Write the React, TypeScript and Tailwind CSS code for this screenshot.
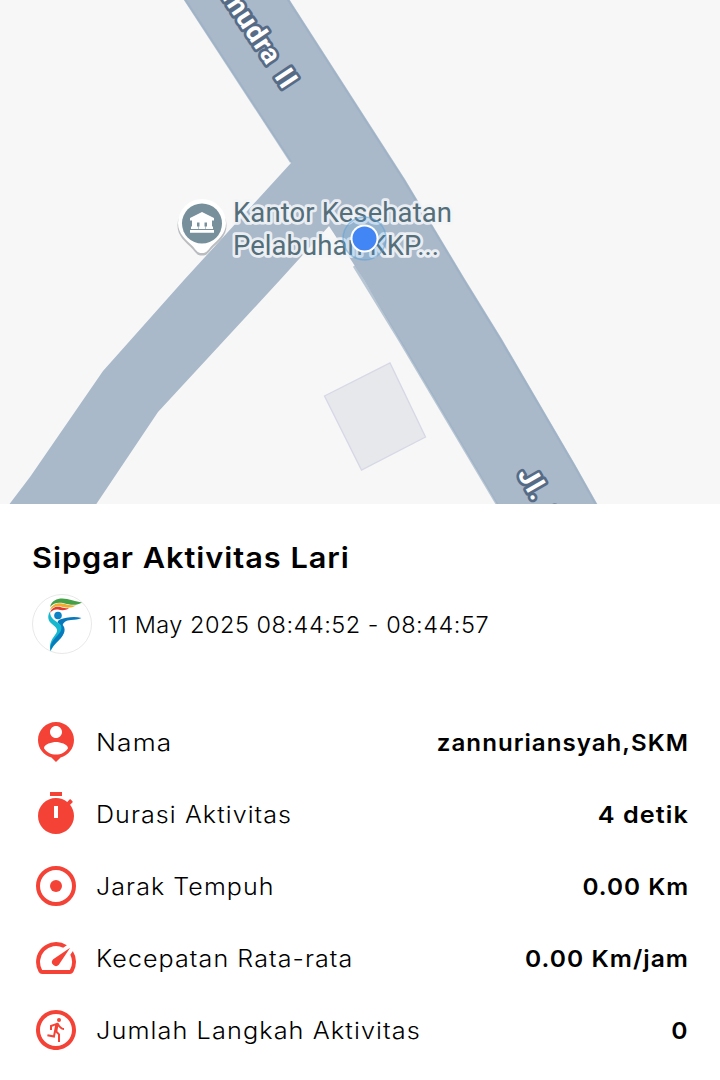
import type { ReactNode } from 'react';
import { MdOutlineRunCircle } from 'react-icons/md';

interface Stat {
  label: string;
  value: string;
  icon: ReactNode;
  labelClass: string;
  valueClass: string;
}

const iconProps = { viewBox: '0 0 24 24', fill: 'currentColor', className: 'size-12' };

const stats: Stat[] = [
  {
    label: 'Nama',
    value: 'zannuriansyah,SKM',
    labelClass: 'scale-x-[1.12]',
    valueClass: 'scale-x-[1.025]',
    icon: (
      <svg {...iconProps}>
        <path d="M12 2c-4.97 0-9 4.03-9 9 0 4.17 2.84 7.67 6.69 8.69L12 22l2.31-2.31C18.16 18.67 21 15.17 21 11c0-4.97-4.03-9-9-9zm0 2c1.66 0 3 1.34 3 3s-1.34 3-3 3-3-1.34-3-3 1.34-3 3-3zm0 14.3c-2.5 0-4.71-1.28-6-3.22.03-1.99 4-3.08 6-3.08 1.99 0 5.97 1.09 6 3.08-1.29 1.94-3.5 3.22-6 3.22z" />
      </svg>
    ),
  },
  {
    label: 'Durasi Aktivitas',
    value: '4 detik',
    labelClass: 'scale-x-[1.067]',
    valueClass: 'scale-x-[1.075]',
    icon: (
      <svg {...iconProps}>
        <path d="M15 1H9v2h6V1zm4.03 6.39 1.42-1.42c-.43-.51-.9-.99-1.41-1.41l-1.42 1.42C16.07 4.74 14.12 4 12 4c-4.97 0-9 4.03-9 9s4.02 9 9 9 9-4.03 9-9c0-2.12-.74-4.07-1.97-5.61zM13 14h-2V8h2v6z" />
      </svg>
    ),
  },
  {
    label: 'Jarak Tempuh',
    value: '0.00 Km',
    labelClass: 'scale-x-[1.065]',
    valueClass: 'scale-x-[1.035]',
    icon: (
      <svg {...iconProps}>
        <circle cx="12" cy="12" r="9" fill="none" stroke="currentColor" strokeWidth="2" />
        <circle cx="12" cy="12" r="3" />
      </svg>
    ),
  },
  {
    label: 'Kecepatan Rata-rata',
    value: '0.00 Km/jam',
    labelClass: 'scale-x-[1.067]',
    valueClass: 'scale-x-[1.045]',
    icon: (
      <svg {...iconProps}>
        <path d="M20.38 8.57l-1.23 1.85a8 8 0 0 1-.22 7.58H5.07A8 8 0 0 1 15.58 6.85l1.85-1.23A10 10 0 0 0 3.35 19a2 2 0 0 0 1.72 1h13.85a2 2 0 0 0 1.74-1 10 10 0 0 0-.27-10.44zm-9.79 6.84a2 2 0 0 0 2.83 0l5.66-8.49-8.49 5.66a2 2 0 0 0 0 2.83z" />
      </svg>
    ),
  },
  {
    label: 'Jumlah Langkah Aktivitas',
    value: '0',
    labelClass: 'scale-x-[1.076]',
    valueClass: 'scale-x-[1.05]',
    icon: <MdOutlineRunCircle className="size-12" />,
  },
];

function RouteMap() {
  return (
    <svg viewBox="0 0 720 504" className="block h-[504px] w-full shrink-0 bg-[#f7f7f7]">
      {/* roads */}
      <path
        d="M183 -2L291 163L184 280L103 371L30 477L8 506H95L158 412L280 280L329 226L364 280L400 341L498 506H598L575 465L502 340L465 280L405 180L288 -2Z"
        fill="#a9b9ca"
      />
      <path
        d="M184 -2L291 162M354 266L400 341L498 506M597 506L574 465L501 340L464 280L404 180L287 -2"
        fill="none"
        stroke="#9db0c5"
        strokeWidth="2.5"
        opacity="0.7"
      />
      {/* building */}
      <path d="M324.5 396L390 363L425.5 437L361.5 470Z" fill="#e7e8ec" stroke="#d6d8e6" strokeWidth="1.3" />

      {/* street names */}
      <g
        fontFamily="Roboto, sans-serif"
        fontWeight="700"
        fontSize="27.5"
        letterSpacing="0.8"
        wordSpacing="4"
        fill="#fff"
        stroke="#566b86"
        strokeWidth="5.5"
        strokeLinejoin="round"
        paintOrder="stroke"
      >
        <text transform="translate(283.5 91) rotate(56.5)" textAnchor="end">
          mudra II
        </text>
        <text transform="translate(517 474) rotate(60)">Jl. S</text>
      </g>

      {/* place marker */}
      <path
        d="M202 201.500a24.500 24.500 0 0 0-24.500 24c0 11 8 16 15.500 24c4 5 5 6 9 6s5-1 9-6c7.500-8 15.500-13 15.500-24a24.500 24.500 0 0 0-24.500-24z"
        fill="#7d8287"
        opacity="0.5"
      />
      <path
        d="M202 199a24 24 0 0 0-24 24c0 11 8 16.500 15 23.500c4 5 5 6.500 9 6.500s5-1.500 9-6.500c7-7 15-12.500 15-23.500a24 24 0 0 0-24-24z"
        fill="#fff"
      />
      <circle cx="202" cy="223.500" r="20" fill="#78909c" />
      <path
        d="M202 212l12 6v2.500h-2v6h1v2.500h-7v-2.500h1v-4h-2.500v4h1v2.500h-7v-2.500h1v-4h-2.500v4h1v2.500h-7v-2.500h1v-6h-2v-2.500zM190 230h24v2.700h-24z"
        fill="#fff"
      />

      <g
        fontFamily="Roboto, sans-serif"
        fontSize="27.5"
        fill="#546e7a"
        stroke="#f3f5f8"
        strokeOpacity="0.9"
        strokeWidth="5.5"
        strokeLinejoin="round"
        paintOrder="stroke"
      >
        <text x="233" y="222" textLength="219">
          Kantor Kesehatan
        </text>
        <text x="233" y="255" textLength="206">
          Pelabuhan KKP...
        </text>
      </g>

      {/* current position */}
      <circle cx="364.500" cy="238.500" r="21.500" fill="#4a9be0" fillOpacity="0.2" stroke="#5a9fd8" strokeOpacity="0.5" strokeWidth="1.500" />
      <circle cx="364.500" cy="238.500" r="14" fill="#fff" />
      <circle cx="364.500" cy="238.500" r="12" fill="#4285f4" />
    </svg>
  );
}

function Logo() {
  return (
    <svg viewBox="0 0 60 60" className="size-[60px] shrink-0">
      <circle cx="30" cy="30" r="29.500" fill="#fff" stroke="#e2e2e2" strokeWidth="0.8" />
      <path d="M18 13C20 5 28 3.500 35 5C41 6.500 45 7.500 50 8.500C44 12.500 37 10.500 31 9C25 8 21 9.500 18 13Z" fill="#43a047" />
      <path d="M18 16C20 9.500 27 8.500 32 9.800C37 11.300 40 11.800 44 11.300C39 15 33 13.800 29 12.600C24 11.600 21 13 18 16Z" fill="#f0ad2e" />
      <path d="M18 19C19.500 13 25 12 29 13.200C32 14 34 14.500 37 14.300C33 17 29 16.300 26 15.600C22 15.200 20 16.500 18 19Z" fill="#dc3a32" />
      <circle cx="26" cy="21.500" r="3.800" fill="#0d82c4" />
      <path d="M49.500 24C42 22 34 23.500 28 25.500C26 26.500 25 28 26 29L30 33C31 28 34 26.500 39 26C43 25.500 46 26 49.500 24Z" fill="#0878bb" />
      <path d="M18 17.500C15 22 16 27 20 30C25 34 27 36 23 41C19 46 17 51 18.500 57C22 50 28 46 31 40C34 34 29 31 25 28C20 25 18 22 18 17.500Z" fill="#15b8ce" />
      <path d="M28 29C34 32 34 38 29 44C25 48 21 51 18.500 57C18 50 20 48 24 43C29 38 31 35 28 29Z" fill="#087bbd" />
    </svg>
  );
}

export default function App() {
  return (
    <div className="flex h-[1080px] w-[720px] flex-col overflow-hidden bg-white font-[Inter,sans-serif] text-black">
      <RouteMap />

      <div className="px-8 pt-[34px]">
        <h1 className="origin-left scale-x-[1.06] text-[29px] leading-10 font-semibold tracking-[0.9px] whitespace-nowrap">
          Sipgar Aktivitas Lari
        </h1>
        <div className="mt-4 flex items-center gap-4">
          <Logo />
          <span className="origin-left scale-x-[1.022] pt-0.5 text-[23px] font-light tracking-[0.5px] whitespace-nowrap">
            11 May 2025 08:44:52 - 08:44:57
          </span>
        </div>
      </div>

      <div className="mt-[52px] px-8">
        {stats.map((item) => (
          <div key={item.label} className="flex h-[72px] items-center text-[23.500px] leading-8 tracking-[1px] whitespace-nowrap">
            <span className="mr-4 text-[#f44336]">{item.icon}</span>
            <span className={`origin-left pt-0.5 font-light ${item.labelClass}`}>{item.label}</span>
            <span className={`-mr-px ml-auto origin-right pt-0.5 font-semibold ${item.valueClass}`}>{item.value}</span>
          </div>
        ))}
      </div>
    </div>
  );
}
